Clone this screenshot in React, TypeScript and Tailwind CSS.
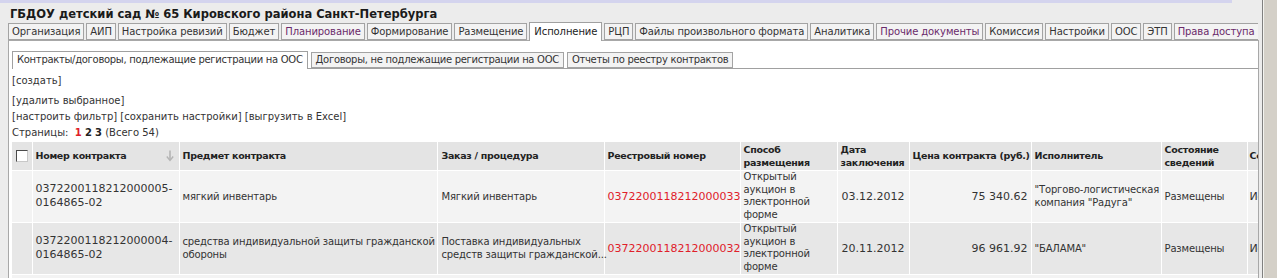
import React from "react";

const tabs = [
  { name: "Организация" },
  { name: "АИП" },
  { name: "Настройка ревизий" },
  { name: "Бюджет" },
  { name: "Планирование", visited: true },
  { name: "Формирование" },
  { name: "Размещение" },
  { name: "Исполнение", active: true },
  { name: "РЦП" },
  { name: "Файлы произвольного формата" },
  { name: "Аналитика" },
  { name: "Прочие документы", visited: true },
  { name: "Комиссия" },
  { name: "Настройки" },
  { name: "ООС" },
  { name: "ЭТП" },
  { name: "Права доступа", visited: true },
];

const subTabs = [
  { name: "Контракты/договоры, подлежащие регистрации на ООС", active: true },
  { name: "Договоры, не подлежащие регистрации на ООС" },
  { name: "Отчеты по реестру контрактов" },
];

const rows = [
  {
    number: ["0372200118212000005-", "0164865-02"],
    subject: ["мягкий инвентарь"],
    order: ["Мягкий инвентарь"],
    reg: "0372200118212000033",
    date: "03.12.2012",
    price: "75 340.62",
    supplier: ['"Торгово-логистическая', 'компания "Радуга"'],
    bg: "bg-[#f3f3f3]",
  },
  {
    number: ["0372200118212000004-", "0164865-02"],
    subject: ["средства индивидуальной защиты гражданской", "обороны"],
    order: ["Поставка индивидуальных", "средств защиты гражданской..."],
    reg: "0372200118212000032",
    date: "20.11.2012",
    price: "96 961.92",
    supplier: ['"БАЛАМА"'],
    bg: "bg-[#e7e7e7]",
  },
];

const Lines = ({ lines }: { lines: string[] }) => (
  <>
    {lines.map((l, i) => (
      <div key={i}>{l}</div>
    ))}
  </>
);

const SortArrow = () => (
  <svg width="8" height="12" viewBox="0 0 8 12" className="shrink-0">
    <path d="M4 0.5 V10" stroke="#b4b4b4" strokeWidth="1.6" />
    <path d="M0.8 6.5 L4 10.5 L7.2 6.5" fill="none" stroke="#b4b4b4" strokeWidth="1.4" />
  </svg>
);

export default function App() {
  return (
    <div className="w-[1277px] h-[278px] overflow-hidden bg-[#ececec] flex font-['DejaVu_Sans',sans-serif] text-[#333]">
      <div className="flex-1 min-w-0 flex flex-col">
        <div className="h-[3px] shrink-0 bg-[#d4d4ee] mr-[30px]" />
        {/* Title */}
        <div className="h-[19px] shrink-0 pl-[10px] pt-[3px] text-[11.5px] leading-[16px] font-bold text-[#1a1a1a] whitespace-nowrap">
          ГБДОУ детский сад № 65 Кировского района Санкт-Петербурга
        </div>

        {/* Main tabs */}
        <div className="flex shrink-0 items-end gap-[2px] pl-[8px] mr-[4px] h-[19px] overflow-hidden whitespace-nowrap relative z-10">
          {tabs.map((t) =>
            t.active ? (
              <div
                key={t.name}
                className="shrink-0 h-[19px] px-[4px] bg-white border border-b-0 border-[#a0a0a0] text-[10px] tracking-[-0.1px] leading-[18px] text-[#222]"
              >
                {t.name}
              </div>
            ) : (
              <div
                key={t.name}
                className={`shrink-0 h-[17px] mb-px px-[3px] bg-[#f3f3f3] border border-[#a3a3a3] text-[10px] tracking-[-0.1px] leading-[15px] ${
                  t.visited ? "text-[#6a2a6a]" : "text-[#333]"
                }`}
              >
                {t.name}
              </div>
            )
          )}
        </div>

        {/* Panel */}
        <div className="flex-1 shrink-0 -mt-px ml-[8px] mr-[3px] bg-white border-l border-t border-r border-[#a8a8a8] pl-[3px] pt-[10px] min-w-0 overflow-hidden">
          <div className="flex items-end gap-[3px] h-[18px] border-b border-[#a0a0a0] whitespace-nowrap">
            {subTabs.map((t) =>
              t.active ? (
                <div
                  key={t.name}
                  className="h-[18px] px-[4px] bg-white border border-b-0 border-[#a0a0a0] text-[10px] tracking-[-0.3px] leading-[16px] -mb-px"
                >
                  {t.name}
                </div>
              ) : (
                <div
                  key={t.name}
                  className="h-[16px] px-[4px] bg-[#f3f3f3] border border-[#a3a3a3] text-[10px] tracking-[-0.3px] leading-[14px]"
                >
                  {t.name}
                </div>
              )
            )}
          </div>

          {/* Actions */}
          <div className="text-[10px] leading-[16px] text-[#333] pt-[4px]">
            <div>[создать]</div>
            <div className="mt-[4px]">[удалить выбранное]</div>
            <div>[настроить фильтр] [сохранить настройки] [выгрузить в Excel]</div>
            <div>
              Страницы:&nbsp; <span className="font-bold text-[#e0202a]">1</span>{" "}
              <span className="font-bold text-[#222]">2</span>{" "}
              <span className="font-bold text-[#222]">3</span> (Всего 54)
            </div>
          </div>

          {/* Table */}
          <div className="mt-[1px] w-[1246px] overflow-hidden">
            <table className="table-fixed w-[1346px] border-collapse">
              <colgroup>
                <col className="w-[20px]" />
                <col className="w-[147px]" />
                <col className="w-[258px]" />
                <col className="w-[167px]" />
                <col className="w-[136px]" />
                <col className="w-[97px]" />
                <col className="w-[72px]" />
                <col className="w-[122px]" />
                <col className="w-[130px]" />
                <col className="w-[86px]" />
                <col className="w-[111px]" />
              </colgroup>
              <thead>
                <tr className="h-[28px] bg-[#e4e4e4] text-[9.5px] tracking-[-0.3px] leading-[13px] font-bold text-[#222] text-left align-middle">
                  <th className="border-r border-white pl-[4px]">
                    <div className="w-[12px] h-[12px] bg-white border border-[#4a4a4a] border-r-[#c8c8c8] border-b-[#c8c8c8]" />
                  </th>
                  <th className="border-r border-white pl-[3px] pr-[5px]">
                    <div className="flex items-center justify-between">
                      <span>Номер контракта</span>
                      <SortArrow />
                    </div>
                  </th>
                  <th className="border-r border-white pl-[3px]">Предмет контракта</th>
                  <th className="border-r border-white pl-[4px]">Заказ / процедура</th>
                  <th className="border-r border-white pl-[3px]">Реестровый номер</th>
                  <th className="border-r border-white pl-[3px]">
                    Способ
                    <br />
                    размещения
                  </th>
                  <th className="border-r border-white pl-[3px]">
                    Дата
                    <br />
                    заключения
                  </th>
                  <th className="border-r border-white pl-[3px] whitespace-nowrap">Цена контракта (руб.)</th>
                  <th className="border-r border-white pl-[3px]">Исполнитель</th>
                  <th className="border-r border-white pl-[3px]">
                    Состояние
                    <br />
                    сведений
                  </th>
                  <th className="pl-[2px] whitespace-nowrap">Состояние контракта</th>
                </tr>
              </thead>
              <tbody>
                {rows.map((r) => (
                  <tr key={r.reg} className={`${r.bg} h-[52px] border-t border-white align-middle text-[10px] tracking-[-0.15px] leading-[13px] text-[#333]`}>
                    <td className="border-r border-white" />
                    <td className="border-r border-white pl-[3px] text-[11px] tracking-normal leading-[14px] whitespace-nowrap">
                      <Lines lines={r.number} />
                    </td>
                    <td className="border-r border-white pl-[3px] whitespace-nowrap">
                      <Lines lines={r.subject} />
                    </td>
                    <td className="border-r border-white pl-[4px] whitespace-nowrap">
                      <Lines lines={r.order} />
                    </td>
                    <td className="border-r border-white pl-[3px] text-[11px] tracking-normal text-[#e0202a] whitespace-nowrap">{r.reg}</td>
                    <td className="border-r border-white pl-[3px] leading-[12.5px] whitespace-nowrap">
                      <Lines lines={["Открытый", "аукцион в", "электронной", "форме"]} />
                    </td>
                    <td className="border-r border-white pl-[4px] text-[11px] tracking-normal whitespace-nowrap">{r.date}</td>
                    <td className="border-r border-white pr-[3px] text-right text-[11px] tracking-normal whitespace-nowrap">{r.price}</td>
                    <td className="border-r border-white pl-[3px] whitespace-nowrap">
                      <Lines lines={r.supplier} />
                    </td>
                    <td className="border-r border-white pl-[3px] whitespace-nowrap">Размещены</td>
                    <td className="pl-[2px] text-[11px] whitespace-nowrap">Исполнение</td>
                  </tr>
                ))}
                <tr className="h-[10px] bg-[#f3f3f3] border-t border-white">
                  <td colSpan={11} />
                </tr>
              </tbody>
            </table>
          </div>
        </div>
      </div>

      {/* Scrollbar */}
      <div className="w-[15px] shrink-0 bg-[#d4d0c8] border-l border-[#808080] shadow-[inset_1px_0_0_#f4f4f0]" />
    </div>
  );
}
